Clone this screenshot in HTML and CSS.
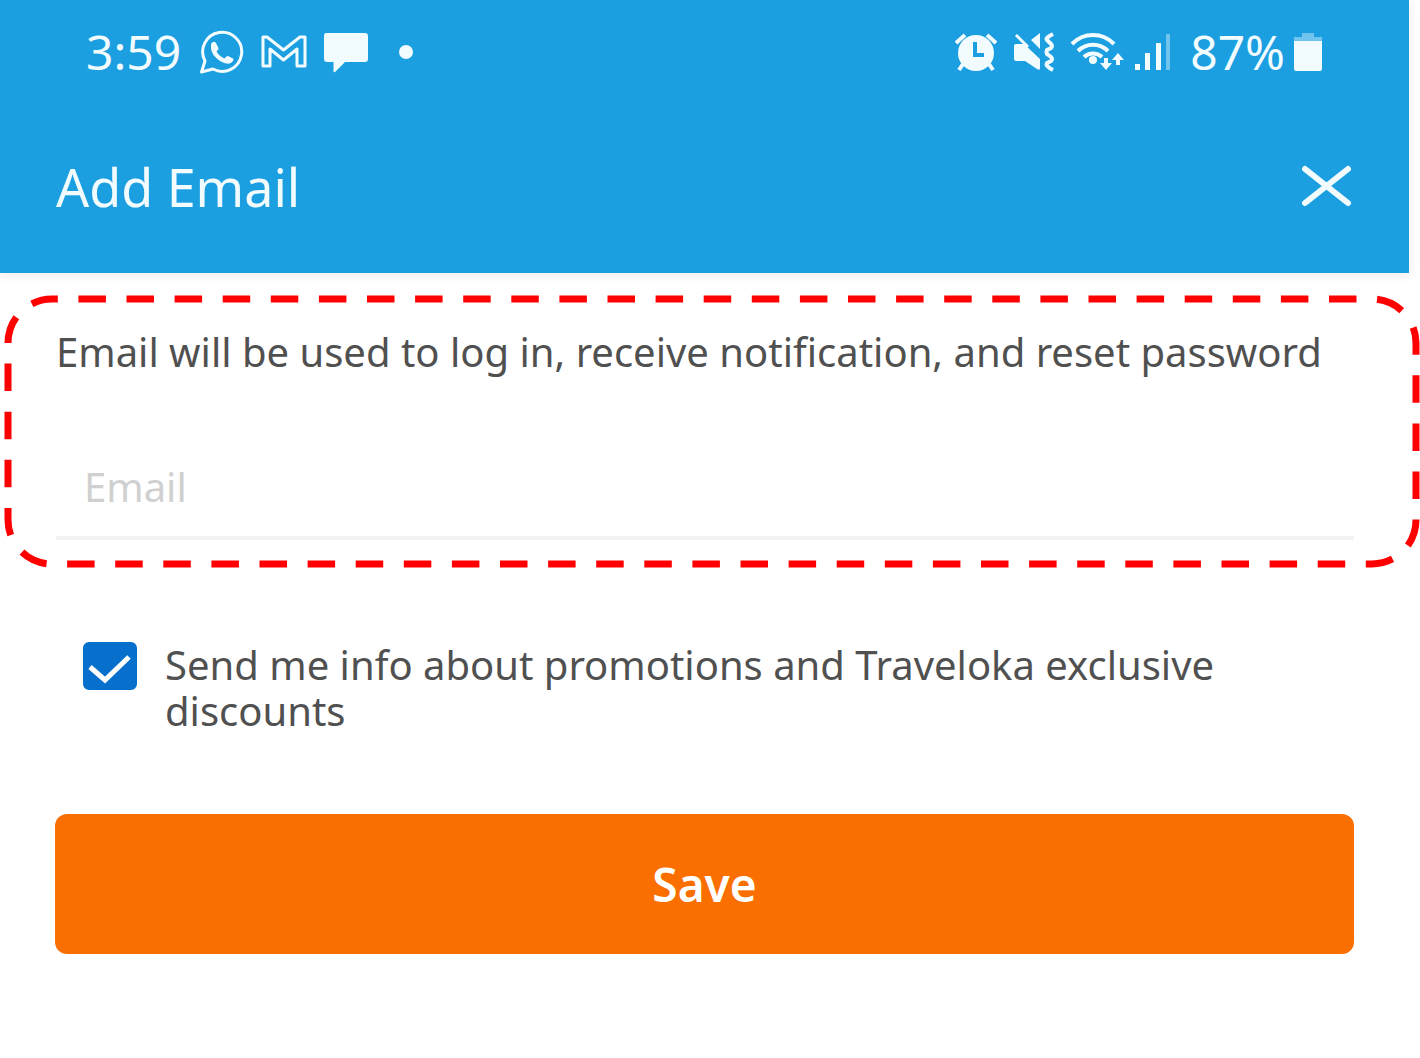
FILE: index.html
```html
<!DOCTYPE html>
<html lang="en">
  <head>
    <meta charset="UTF-8" />
    <meta name="viewport" content="width=device-width, initial-scale=1.0" />
    <title>Add Email</title>
    <link rel="stylesheet" href="styles.css">
  </head>
  <body>
    <header class="app-header">
      <div class="status-bar">
        <div class="status-group">
          <span class="status-text clock">3:59</span>
          <!-- WhatsApp -->
          <svg class="status-icon" width="46" height="46" viewBox="0 0 46 46">
            <path d="M6 32 A19.5 19.5 0 1 1 14 40 L2.5 43 Z" fill="none" stroke="currentColor" stroke-width="3" stroke-linejoin="round" />
            <path d="M12 15 q2.500-4 5-1 l2.500 5 q.3 1.500-2 3.500 q3 5 8 7 q2-3 3.500-2.500 l5 2.500 q1.500 1.500-1.500 4 q-4 3-11.500-1.500 q-9-6.500-9-13 z" fill="currentColor" />
          </svg>
          <!-- Gmail -->
          <svg class="status-icon" width="50" height="46" viewBox="0 0 50 46">
            <path d="M4 37 V8 H8 L24.500 21 L41 8 H46 V37 H38 V20 L24.500 31 L11 20 V37 Z" fill="none" stroke="currentColor" stroke-width="3" stroke-linejoin="round" />
          </svg>
          <!-- Messages -->
          <svg class="status-icon" width="46" height="46" viewBox="0 0 46 46">
            <path d="M3 4 H42 Q45 4 45 7 V30 Q45 33 42 33 H22 L12 43 Q10.500 44 10.500 42 V33 H4 Q1 33 1 30 V7 Q1 4 3 4 Z" fill="currentColor" />
          </svg>
          <span class="status-dot"></span>
        </div>
        <div class="status-group">
          <!-- Alarm -->
          <svg class="status-icon" width="44" height="46" viewBox="0 0 44 46">
            <path d="M2 14 L11 6 M42 14 L33 6 M9 35 L5 41 M35 35 L39 41" stroke="currentColor" stroke-width="4" />
            <circle cx="22" cy="24" r="18" fill="currentColor" />
            <path d="M21 13 V26 H30" fill="none" stroke="#1b9fe1" stroke-width="4" />
          </svg>
          <!-- Vibrate, muted -->
          <svg class="status-icon" width="44" height="46" viewBox="0 0 44 46">
            <path d="M2 17 Q2 15 4 15 H12 L28 30 V39 Q28 42 25 40 L13 32 H4 Q2 32 2 30 Z" fill="currentColor" />
            <path d="M19 11 L28 4 V20 Z" fill="currentColor" />
            <path d="M4 6 L16 18" stroke="currentColor" stroke-width="3" />
            <path d="M41 5 Q33 9 35 11 L39 15 Q41 17 39 19 L35 21 Q34 23 35 25 L39 28 Q41 30 39 32 L35 34 Q33 37 41 41" fill="none" stroke="currentColor" stroke-width="4" />
          </svg>
          <!-- Wi-Fi -->
          <svg class="status-icon wifi" width="54" height="46" viewBox="0 0 54 46">
            <path d="M2 15 A29 29 0 0 1 44 15 M8 22 A21 21 0 0 1 38 22 M14 28 A13 13 0 0 1 32 28" fill="none" stroke="currentColor" stroke-width="4" />
            <circle cx="23" cy="31" r="4" fill="currentColor" />
            <path d="M34 29 H38 V34 H42 L36 41 L30 34 H34 Z M46 36 H50 V31 H54 L48 24 L42 31 H46 Z" fill="currentColor" />
          </svg>
          <!-- Signal -->
          <svg class="status-icon signal" width="38" height="46" viewBox="0 0 38 46">
            <path d="M1 35 H6 V41 H1 Z M11 24 H16 V41 H11 Z M22 14 H27 V41 H22 Z" fill="currentColor" />
            <path d="M32 5 H36 V41 H32 Z" fill="currentColor" opacity=".4" />
          </svg>
          <span class="status-text">87%</span>
          <!-- Battery -->
          <svg class="status-icon battery" width="30" height="46" viewBox="0 0 30 46">
            <path d="M9 4 H21 V8 H29 V13 H1 V8 H9 Z" fill="currentColor" opacity=".4" />
            <path d="M1 12 H29 V40 Q29 42 27 42 H3 Q1 42 1 40 Z" fill="currentColor" />
          </svg>
        </div>
      </div>
      <div class="title-bar">
        <h1>Add Email</h1>
        <button type="button" class="close-button" aria-label="Close">
          <svg width="52" height="44" viewBox="0 0 52 44">
            <path d="M4 4 L47 38 M47 4 L4 38" stroke="currentColor" stroke-width="6" stroke-linecap="round" />
          </svg>
        </button>
      </div>
    </header>

    <form class="email-form">
      <div class="email-section">
        <svg class="highlight">
          <rect class="highlight-line" />
        </svg>
        <label for="email">Email will be used to log in, receive notification, and reset password</label>
        <input type="email" id="email" class="email-input" placeholder="Email" />
      </div>

      <div class="form-body">
        <label class="promo">
          <span class="checkbox">
            <input type="checkbox" checked />
            <svg viewBox="0 0 54 48">
              <path d="M7 25 L22 38 L46 15" fill="none" stroke="#ffffff" stroke-width="5" />
            </svg>
          </span>
          <span>Send me info about promotions and Traveloka exclusive discounts</span>
        </label>
        <button type="submit" class="save-button">Save</button>
      </div>
    </form>
  </body>
</html>
```
FILE: styles.css
```css
:root {
  --header-color: #1b9fe1;
  --save-color: #fb6f00;
  --check-color: #0770cd;
  --text-color: #505050;
}
* {
  box-sizing: border-box;
}
body {
  margin: 0;
  background: #ffffff;
  color: var(--text-color);
  font-family: "Noto Sans", "Open Sans", sans-serif;
  font-size: 40px;
  line-height: 48px;
}
.app-header {
  margin-right: 11px;
  padding: 20px 56px 48px;
  background: var(--header-color);
  box-shadow: 0 2px 10px rgba(0, 0, 0, 0.08);
  color: #f2fcff;
}
.status-bar {
  display: flex;
  justify-content: space-between;
  align-items: center;
  height: 64px;
  padding: 0 30px;
}
.status-group {
  display: flex;
  align-items: center;
  gap: 14px;
}
.status-text {
  font-size: 48px;
}
.clock {
  margin-right: 4px;
}
.status-dot {
  width: 14px;
  height: 14px;
  margin-left: 16px;
  border-radius: 50%;
  background: currentColor;
}
.status-icon {
  display: block;
}
.wifi {
  margin-right: -4px;
}
.signal {
  margin-right: 4px;
}
.battery {
  margin-left: -6px;
}
.title-bar {
  display: flex;
  justify-content: space-between;
  align-items: center;
  margin-top: 65px;
  height: 76px;
}
h1 {
  margin: 0;
  font-size: 52px;
  font-weight: 400;
}
.close-button {
  padding: 0;
  border: none;
  background: none;
  color: inherit;
  cursor: pointer;
}
.close-button svg {
  display: block;
}
.email-section {
  position: relative;
  margin: 22px 0 0 4px;
  padding: 33px 66px 28px 52px;
}
.highlight {
  position: absolute;
  inset: 0;
  width: 100%;
  height: 100%;
  pointer-events: none;
}
.highlight-line {
  x: 4px;
  y: 4px;
  width: calc(100% - 8px);
  height: calc(100% - 8px);
  rx: 44px;
  fill: none;
  stroke: #ff0000;
  stroke-width: 7px;
  stroke-dasharray: 27.5 20.6;
  stroke-dashoffset: 21.7;
}
.email-section label {
  display: block;
}
.email-input {
  display: block;
  width: 100%;
  height: 103px;
  margin-top: 61px;
  padding: 0 28px;
  border: none;
  border-bottom: 4px solid #f2f2f2;
  outline: none;
  background: none;
  color: inherit;
  font: inherit;
}
.email-input::placeholder {
  color: #d0d0d0;
  opacity: 1;
}
.form-body {
  padding: 74px 66px 48px 55px;
}
.promo {
  display: flex;
  align-items: flex-start;
  gap: 28px;
  padding: 0 28px;
  line-height: 46px;
}
.checkbox {
  display: grid;
  flex: none;
  width: 54px;
  height: 48px;
}
.checkbox > * {
  grid-area: 1 / 1;
}
.checkbox input {
  appearance: none;
  width: 100%;
  height: 100%;
  margin: 0;
  border: 2px solid var(--check-color);
  border-radius: 6px;
}
.checkbox input:checked {
  background: var(--check-color);
}
.checkbox svg {
  visibility: hidden;
  pointer-events: none;
}
.checkbox input:checked + svg {
  visibility: visible;
}
.save-button {
  display: block;
  width: 100%;
  height: 140px;
  margin-top: 80px;
  border: none;
  border-radius: 12px;
  background: var(--save-color);
  color: #ffffff;
  font-family: inherit;
  font-size: 46px;
  font-weight: 600;
  cursor: pointer;
}
```
